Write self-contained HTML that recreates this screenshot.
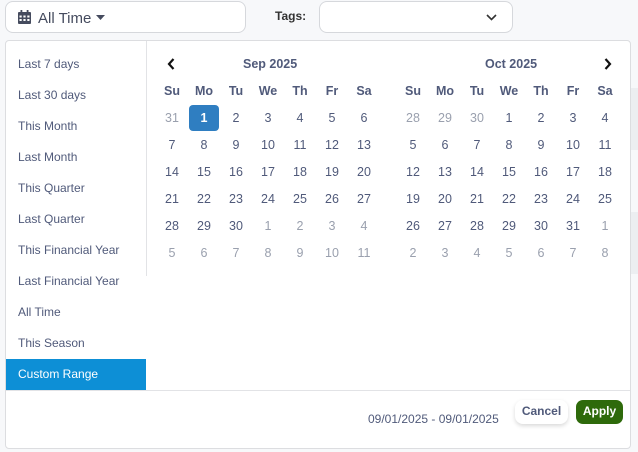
<!DOCTYPE html>
<html><head><style>
*{margin:0;padding:0;box-sizing:border-box}
body{width:638px;height:452px;background:#f7f8fa;font-family:"Liberation Sans",sans-serif;position:relative;overflow:hidden;color:#505a7a}
.btn1{position:absolute;left:5px;top:1px;width:241px;height:32px;background:#fff;border:1px solid #d6d8dc;border-radius:8px}
.btn1 span{position:absolute;left:32px;top:8px;font-size:15px;color:#454b5e}
.tags{position:absolute;left:275px;top:9px;font-size:12px;font-weight:bold;color:#333}
.sel{position:absolute;left:319px;top:1px;width:194px;height:32px;background:#fff;border:1px solid #d6d8dc;border-radius:8px}
.pop{position:absolute;left:5px;top:40px;width:626px;height:409px;background:#fff;border:1px solid #dcdde0;border-radius:4px}
.menu div{position:absolute;left:0;width:140px;height:31px;font-size:12px;padding-left:12px;line-height:31px;color:#505a7a}
.menu div.act{background:#0d8fd6;color:#fff}
.vline{position:absolute;left:140px;top:0;width:1px;height:235px;background:#e2e3e6}
.hline{position:absolute;left:0;top:349px;width:624px;height:1px;background:#e2e3e6}
.c{position:absolute;width:30px;text-align:center;font-size:12.5px;color:#505a7a;line-height:26px}
.c.o{color:#9aa0ae}
.c.h{font-weight:bold}
.c.s{background:#2f7ec1;color:#fff;border-radius:4px;font-weight:bold}
.t{position:absolute;font-size:12.5px;font-weight:bold;color:#505a7a}
.bg{position:absolute;left:631px;width:7px;background:#eceef1}
</style></head><body>
<div class="btn1"><svg style="position:absolute;left:12px;top:8px" width="13" height="14" viewBox="0 0 13 14"><rect x="0" y="2" width="13" height="12" rx="1" fill="#454b5e"/><rect x="2.5" y="0" width="1.8" height="3" fill="#454b5e"/><rect x="8.7" y="0" width="1.8" height="3" fill="#454b5e"/><g fill="#fff"><rect x="1.5" y="5.5" width="2.2" height="2"/><rect x="5.4" y="5.5" width="2.2" height="2"/><rect x="9.3" y="5.5" width="2.2" height="2"/><rect x="1.5" y="9" width="2.2" height="2"/><rect x="5.4" y="9" width="2.2" height="2"/><rect x="9.3" y="9" width="2.2" height="2"/></g></svg><span>All Time</span><svg style="position:absolute;left:90px;top:13px" width="9" height="6"><path d="M0 0h9L4.5 5z" fill="#454b5e"/></svg></div>
<div class="tags">Tags:</div>
<div class="sel"><svg style="position:absolute;left:166px;top:12px" width="11" height="7"><path d="M1 1l4.5 4.5L10 1" stroke="#333" stroke-width="1.6" fill="none"/></svg></div>
<div class="bg" style="top:88px;height:62px"></div>
<div class="bg" style="top:212px;height:62px"></div>
<div class="pop">
<div class="menu">
<div style="top:8px">Last 7 days</div><div style="top:39px">Last 30 days</div><div style="top:70px">This Month</div><div style="top:101px">Last Month</div><div style="top:132px">This Quarter</div><div style="top:163px">Last Quarter</div><div style="top:194px">This Financial Year</div><div style="top:225px">Last Financial Year</div><div style="top:256px">All Time</div><div style="top:287px">This Season</div><div class="act" style="top:318px">Custom Range</div>
</div>
<div class="vline"></div><div class="hline"></div>
<svg style="position:absolute;left:161px;top:17px" width="8" height="12"><path d="M6.5 1L2 6l4.5 5" stroke="#111" stroke-width="2.2" fill="none"/></svg>
<svg style="position:absolute;left:598px;top:17px" width="8" height="12"><path d="M1.5 1L6 6l-4.5 5" stroke="#111" stroke-width="2.2" fill="none"/></svg>
<div class="t" style="left:237px;top:16px">Sep 2025</div>
<div class="t" style="left:479px;top:16px">Oct 2025</div>
<div id="cal"></div>
<div style="position:absolute;left:362px;top:371px;font-size:12px;color:#505a7a">09/01/2025 - 09/01/2025</div>
<div style="position:absolute;left:509px;top:359px;width:53px;height:24px;background:#fff;border-radius:8px;box-shadow:0 2px 4px rgba(0,0,0,.15);font-size:12px;font-weight:bold;color:#505a7a;text-align:center;line-height:22px">Cancel</div>
<div style="position:absolute;left:570px;top:359px;width:47px;height:24px;background:#2e6a0b;border-radius:7px;font-size:12px;font-weight:bold;color:#fff;text-align:center;line-height:23px">Apply</div>
</div>
<script>
var cal=document.getElementById('cal'),h='';
var dn=['Su','Mo','Tu','We','Th','Fr','Sa'];
var sep=[[31,1,2,3,4,5,6],[7,8,9,10,11,12,13],[14,15,16,17,18,19,20],[21,22,23,24,25,26,27],[28,29,30,1,2,3,4],[5,6,7,8,9,10,11]];
var oct=[[28,29,30,1,2,3,4],[5,6,7,8,9,10,11],[12,13,14,15,16,17,18],[19,20,21,22,23,24,25],[26,27,28,29,30,31,1],[2,3,4,5,6,7,8]];
function m(x0,d,isSep){for(var i=0;i<7;i++){var x=x0+i*32-15-6;h+='<div class="c h" style="left:'+x+'px;top:37px">'+dn[i]+'</div>';
for(var r=0;r<6;r++){var v=d[r][i];var o=(r==0&&v>20)||(r>=4&&v<15);var cls='c'+(o?' o':'');if(isSep&&r==0&&v==1)cls='c s';
h+='<div class="'+cls+'" style="left:'+x+'px;top:'+(64+r*27)+'px">'+v+'</div>';}}}
m(172,sep,1);m(413,oct,0);cal.innerHTML=h;
</script>
</body></html>
